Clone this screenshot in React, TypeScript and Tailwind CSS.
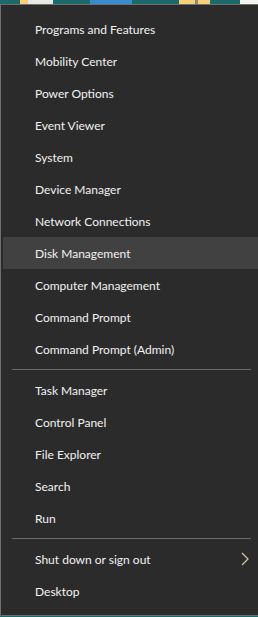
import React from "react";

const group1 = [
  "Programs and Features",
  "Mobility Center",
  "Power Options",
  "Event Viewer",
  "System",
  "Device Manager",
  "Network Connections",
  "Disk Management",
  "Computer Management",
  "Command Prompt",
  "Command Prompt (Admin)",
];
const group2 = ["Task Manager", "Control Panel", "File Explorer", "Search", "Run"];

function Item({ label, active, arrow }: { label: string; active?: boolean; arrow?: boolean }) {
  return (
    <div
      className={`relative flex h-[32px] items-center pl-[32px] pt-[1px] text-[12px] leading-none text-[#f2f2f2] ${
        active ? "bg-[#414141]" : ""
      }`}
    >
      <span>{label}</span>
      {arrow && (
        <svg
          className="absolute right-[9px] top-[9px]"
          width="8"
          height="14"
          viewBox="0 0 8 14"
          fill="none"
        >
          <path d="M1 1 L7 7 L1 13" stroke="#d8c7a8" strokeWidth="1.2" />
        </svg>
      )}
    </div>
  );
}

function Sep() {
  return (
    <div className="py-[4px] pl-[9px] pr-[7px]">
      <div className="h-px bg-[#6a6a6a]" />
    </div>
  );
}

export default function App() {
  return (
    <div
      className="flex h-[617px] w-[258px] flex-col overflow-hidden bg-[#1d6a6a]"
      style={{ fontFamily: 'Lato, "Noto Sans", sans-serif' }}
    >
      <div className="flex h-[4px] shrink-0">
        <div className="w-[20px] bg-[#1d6a6a]" />
        <div className="w-[8px] bg-[#f5d27a]" />
        <div className="w-[25px] bg-[#e8e8e4]" />
        <div className="w-[37px] bg-[#1d6a6a]" />
        <div className="w-[42px] bg-[#3a8ad0]" />
        <div className="w-[47px] bg-[#1d6a6a]" />
        <div className="w-[16px] bg-[#f5d27a]" />
        <div className="w-[3px] bg-[#8a8a7a]" />
        <div className="w-[12px] bg-[#f5d27a]" />
        <div className="w-[30px] bg-[#1d6a6a]" />
        <div className="flex-1 bg-[#f4f4f0]" />
      </div>
      <div className="flex h-[612px] shrink-0 flex-col border-l border-t border-b border-[#6f6f6f] bg-[#2b2b2b] pl-[2px] pt-[8px]">
        {group1.map((l) => (
          <Item key={l} label={l} active={l === "Disk Management"} />
        ))}
        <Sep />
        {group2.map((l) => (
          <Item key={l} label={l} />
        ))}
        <Sep />
        <Item label="Shut down or sign out" arrow />
        <Item label="Desktop" />
      </div>
    </div>
  );
}
